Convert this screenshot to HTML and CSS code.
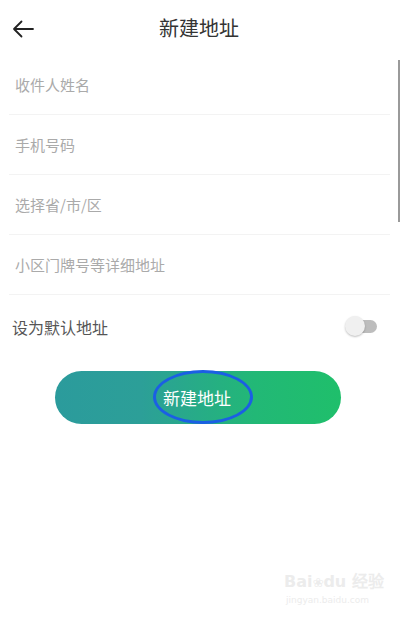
FILE: index.html
```html
<!DOCTYPE html>
<html lang="zh-CN">
<head>
    <meta charset="UTF-8">
    <meta name="viewport" content="width=device-width, initial-scale=1.0">
    <title>新建地址</title>
    <link rel="stylesheet" href="styles.css">
</head>
<body>
    <div class="page">
        <div class="top">
            <span class="back">
                <svg width="22" height="18" viewBox="0 0 22 18">
                    <path d="M21 9H2M9.5 1.5L2 9l7.5 7.5" fill="none" stroke="#222" stroke-width="1.8" stroke-linecap="round" stroke-linejoin="round"/>
                </svg>
            </span>
            <h1>新建地址</h1>
            <span></span>
        </div>

        <div class="field">收件人姓名</div>
        <div class="field">手机号码</div>
        <div class="field">选择省/市/区</div>
        <div class="field">小区门牌号等详细地址</div>

        <div class="switch-row">
            <span>设为默认地址</span>
            <span class="toggle"><i></i></span>
        </div>

        <div class="btn">
            新建地址
            <span class="ring"></span>
        </div>

        <div class="scroll"></div>
        <div class="mark">
            <b>Bai<span class="paw">❀</span>du 经验</b>
            <small>jingyan.baidu.com</small>
        </div>
    </div>
</body>
</html>
```

FILE: styles.css
```css
*{
    margin: 0px;
    padding: 0px;
    box-sizing: border-box;
}
body{
    font-family: "Noto Sans CJK SC", "Noto Sans", sans-serif;
    background: #fff;
}
.page{
    position: relative;
    width: 401px;
    height: 627px;
    overflow: hidden;
}
.top{
    height: 55px;
    display: grid;
    grid-template-columns: 1fr auto 1fr;
    align-items: center;
    padding: 0 12px;
}
.back{
    display: flex;
    align-items: center;
    padding-top: 2px;
}
.top h1{
    font-size: 20px;
    font-weight: 400;
    color: #333;
    padding-right: 3px;
}
.field{
    height: 60px;
    margin: 0 11px 0 9px;
    padding-left: 6px;
    border-bottom: 1px solid #f3f3f3;
    display: flex;
    align-items: center;
    font-size: 15px;
    color: #aaa;
}
.switch-row{
    height: 61px;
    display: flex;
    align-items: center;
    justify-content: space-between;
    padding: 2px 24px 0 12px;
    font-size: 16px;
    color: #555;
}
.toggle{
    position: relative;
    width: 31px;
    height: 13px;
    border-radius: 7px;
    background: #bdbdbd;
}
.toggle i{
    position: absolute;
    left: -1px;
    top: -4px;
    width: 20px;
    height: 20px;
    border-radius: 50%;
    background: #f0f0f0;
    box-shadow: 0 1px 2px rgba(0,0,0,0.25);
}
.btn{
    position: relative;
    margin: 15px 0 0 55px;
    width: 286px;
    height: 53px;
    border-radius: 27px;
    background: linear-gradient(90deg, #2b9b9c 0%, #2c9f98 30%, #22b876 70%, #1fbf6b 100%);
    color: #fff;
    font-size: 17px;
    display: flex;
    align-items: center;
    justify-content: center;
    padding-right: 2px;
}
.ring{
    position: absolute;
    left: 98px;
    top: -1px;
    width: 100px;
    height: 54px;
    border: 3px solid #1b5fe4;
    border-radius: 50%;
}
.scroll{
    position: absolute;
    right: 1px;
    top: 60px;
    width: 2px;
    height: 162px;
    background: #9a9a9a;
}
.mark{
    position: absolute;
    left: 284px;
    top: 572px;
    display: flex;
    flex-direction: column;
    white-space: nowrap;
    color: #ececec;
    font-family: "DejaVu Sans", sans-serif;
}
.mark b{
    font-size: 16px;
    line-height: 20px;
}
.mark .paw{
    font-size: 13px;
}
.mark small{
    font-size: 9px;
    line-height: 14px;
    padding-left: 2px;
}
```
